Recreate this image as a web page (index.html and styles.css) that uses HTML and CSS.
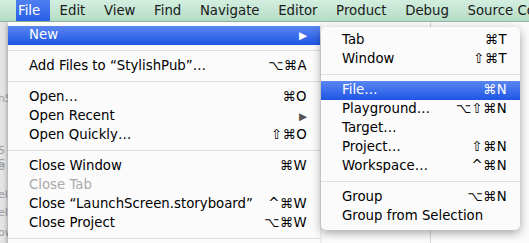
FILE: index.html
```html
<!DOCTYPE html>
<html lang="en">
<head>
    <meta charset="UTF-8">
    <title>Xcode File Menu</title>
    <link rel="stylesheet" href="styles.css">
</head>
<body>
    <div class="menubar">
        <span class="menu-title active">File</span>
        <span class="menu-title">Edit</span>
        <span class="menu-title">View</span>
        <span class="menu-title">Find</span>
        <span class="menu-title">Navigate</span>
        <span class="menu-title">Editor</span>
        <span class="menu-title">Product</span>
        <span class="menu-title">Debug</span>
        <span class="menu-title">Source Control</span>
    </div>

    <div class="desktop">
        <div class="window-strip">
            <span class="ghost g1">nS</span>
            <span class="ghost g2">5 S</span>
            <span class="ghost g3">b</span>
            <span class="ghost g4">ele</span>
            <span class="ghost g5">ele</span>
            <span class="ghost g6">ow</span>
        </div>
        <div class="pane-line"></div>
    </div>

    <!-- File menu -->
    <div class="menu file-menu">
        <div class="item selected"><span>New</span><span class="arrow">&#9654;</span></div>
        <div class="separator"></div>
        <div class="item"><span>Add Files to &ldquo;StylishPub&rdquo;&hellip;</span><span class="key">&#8997;&#8984;A</span></div>
        <div class="separator"></div>
        <div class="item"><span>Open&hellip;</span><span class="key">&#8984;O</span></div>
        <div class="item"><span>Open Recent</span><span class="arrow dim">&#9654;</span></div>
        <div class="item"><span>Open Quickly&hellip;</span><span class="key">&#8679;&#8984;O</span></div>
        <div class="separator"></div>
        <div class="item"><span>Close Window</span><span class="key">&#8984;W</span></div>
        <div class="item disabled"><span>Close Tab</span></div>
        <div class="item"><span>Close &ldquo;LaunchScreen.storyboard&rdquo;</span><span class="key">^&#8984;W</span></div>
        <div class="item"><span>Close Project</span><span class="key">&#8997;&#8984;W</span></div>
        <div class="separator"></div>
    </div>

    <!-- New submenu -->
    <div class="menu submenu">
        <div class="item"><span>Tab</span><span class="key">&#8984;T</span></div>
        <div class="item"><span>Window</span><span class="key">&#8679;&#8984;T</span></div>
        <div class="separator"></div>
        <div class="item selected"><span>File&hellip;</span><span class="key">&#8984;N</span></div>
        <div class="item"><span>Playground&hellip;</span><span class="key">&#8997;&#8679;&#8984;N</span></div>
        <div class="item"><span>Target&hellip;</span></div>
        <div class="item"><span>Project&hellip;</span><span class="key">&#8679;&#8984;N</span></div>
        <div class="item"><span>Workspace&hellip;</span><span class="key">^&#8984;N</span></div>
        <div class="separator"></div>
        <div class="item"><span>Group</span><span class="key">&#8997;&#8984;N</span></div>
        <div class="item"><span>Group from Selection</span></div>
    </div>
</body>
</html>
```

FILE: styles.css
```css
body {
    margin: 0;
    width: 529px;
    height: 243px;
    overflow: hidden;
    font-family: 'DejaVu Sans', Verdana, sans-serif;
    font-size: 13.3px;
    color: #000;
    background: #fbfbfb;
    position: relative;
}

.menubar {
    height: 22px;
    display: flex;
    padding-left: 7px;
    background: linear-gradient(#d3eedf, #b5dcc6);
    border-bottom: 1px solid #8fb8a2;
    box-sizing: border-box;
    white-space: nowrap;
    overflow: hidden;
}

.menu-title {
    padding: 0 9.3px;
    line-height: 21px;
    color: #1a1a1a;
}

.menu-title.active {
    margin-left: 9px;
    padding: 0 10px 0 2px;
    background: linear-gradient(#4f7ff0, #275fe6);
    color: #ffffff;
}

.desktop {
    height: 221px;
    display: flex;
}

.window-strip {
    width: 8px;
    height: 100%;
    background: #e4e4e4;
    position: relative;
    overflow: hidden;
    color: #9a9a9a;
    font-size: 11px;
}

.pane-line {
    margin-left: 422px;
    width: 1px;
    background: #d6d6d6;
}

.ghost {
    position: absolute;
    left: -2px;
}
.g1 { top: 70px; }
.g2 { top: 122px; }
.g3 { top: 138px; }
.g4 { top: 166px; }
.g5 { top: 184px; }
.g6 { top: 204px; }

.menu {
    position: absolute;
    background: #fbfbfb;
    padding: 4px 0;
}

.file-menu {
    left: 8px;
    top: 22px;
    width: 312px;
    height: 240px;
    box-shadow: -1px 2px 4px rgba(0, 0, 0, 0.3);
}

.submenu {
    left: 321px;
    top: 27px;
    width: 199px;
    border-radius: 5px;
    box-shadow: 0 3px 10px rgba(0, 0, 0, 0.35);
}

.item {
    display: flex;
    justify-content: space-between;
    height: 19px;
    line-height: 18px;
    padding: 0 13px 0 21px;
    white-space: nowrap;
}

.item.selected {
    background: linear-gradient(#5b86f2, #1d56e4);
    color: #ffffff;
}

.item.disabled {
    color: #a9a9a9;
}

.key {
    letter-spacing: 0.4px;
}

.arrow {
    font-size: 10.5px;
    padding-right: 0;
}

.arrow.dim {
    color: #555;
}

.separator {
    height: 1px;
    margin: 5px 0 6px;
    background: #e0e0e0;
}
```
